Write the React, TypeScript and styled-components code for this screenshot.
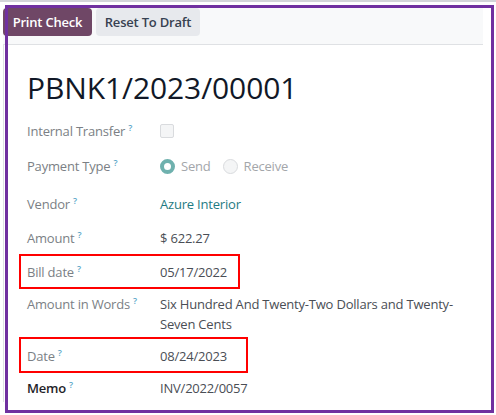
import React from "react";
import styled, { createGlobalStyle } from "styled-components";

const GlobalStyle = createGlobalStyle`
  html, body { margin: 0; padding: 0; background: #ffffff; }
  body { font-family: "Open Sans", "Noto Sans", sans-serif; }
  * { box-sizing: border-box; }
`;

const Page = styled.div`
  position: relative;
  width: 496px;
  height: 415px;
  overflow: hidden;
  background: #fff;
  display: flex;
  flex-direction: column;
`;

const TopRule = styled.div`
  height: 2px;
  background: #d3d5d9;
  margin-bottom: 6px;
`;

const Toolbar = styled.div`
  margin-left: 3px;
  width: 480px;
  height: 37px;
  background: #f8f9fa;
  border-bottom: 1px solid #dfe1e4;
  display: flex;
  align-items: flex-start;
  gap: 4px;
`;

const Button = styled.button<{ $primary?: boolean }>`
  height: 28px;
  padding: 0;
  border: none;
  border-radius: 4px;
  font-family: "Open Sans", sans-serif;
  font-size: 13px;
  line-height: 28px;
  font-weight: 600;
  letter-spacing: -0.2px;
  white-space: nowrap;
  text-align: center;
  cursor: pointer;
  background: ${(p) => (p.$primary ? "#6f4766" : "#e7e9ed")};
  color: ${(p) => (p.$primary ? "#ffffff" : "#374151")};
  width: ${(p) => (p.$primary ? "89px" : "104px")};
`;

const Sheet = styled.div`
  margin-left: 3px;
  width: 480px;
  height: 357px;
  border-left: 1px solid #dfe1e4;
  padding: 25px 0 0 23px;
  display: flex;
  flex-direction: column;
`;

const Title = styled.h1`
  margin: 0;
  font-size: 30px;
  line-height: 36px;
  font-weight: 400;
  color: #111827;
  letter-spacing: -0.1px;
`;

const FieldRow = styled.div<{ $gap: number }>`
  display: grid;
  grid-template-columns: 133px 1fr;
  margin-top: ${(p) => p.$gap}px;
  font-size: 13px;
  line-height: 20px;
  letter-spacing: -0.2px;
`;

const Label = styled.div<{ $strong?: boolean }>`
  color: ${(p) => (p.$strong ? "#1f2328" : "#7b7f85")};
  font-weight: ${(p) => (p.$strong ? 600 : 400)};
  white-space: nowrap;
`;

const Help = styled.sup`
  color: #5aa6c8;
  font-size: 9px;
  font-weight: 600;
  margin-left: 3px;
  vertical-align: 5px;
  line-height: 0;
`;

const Value = styled.div<{ $link?: boolean }>`
  color: ${(p) => (p.$link ? "#1f7b83" : "#4a4e55")};
  padding-right: 20px;
`;

const Checkbox = styled.span`
  display: inline-block;
  width: 14px;
  height: 14px;
  margin-top: 3px;
  border: 1px solid #d9dbde;
  border-radius: 2px;
  background: #f4f5f6;
`;

const RadioGroup = styled.div`
  display: flex;
  align-items: center;
  gap: 6px;
  color: #a3a6aa;
`;

const Radio = styled.span<{ $checked?: boolean }>`
  display: inline-block;
  width: 15px;
  height: 15px;
  border-radius: 50%;
  background: #fff;
  border: ${(p) => (p.$checked ? "4px solid #6fb1ae" : "1px solid #d9dbde")};
  ${(p) => (p.$checked ? "" : "background: #f4f5f6;")}
`;

const RadioText = styled.span`
  margin-right: 6px;
`;

const Frame = styled.div`
  position: absolute;
  left: 5px;
  top: 5px;
  width: 489px;
  height: 408px;
  border: 3px solid #7030a0;
  pointer-events: none;
`;

const Highlight = styled.div<{ $x: number; $y: number; $w: number; $h: number }>`
  position: absolute;
  left: ${(p) => p.$x}px;
  top: ${(p) => p.$y}px;
  width: ${(p) => p.$w}px;
  height: ${(p) => p.$h}px;
  border: 2px solid #ff0000;
  pointer-events: none;
`;

export default function App() {
  return (
    <>
      <GlobalStyle />
      <Page>
        <TopRule />
        <Toolbar>
          <Button $primary>Print Check</Button>
          <Button>Reset To Draft</Button>
        </Toolbar>
        <Sheet>
          <Title>PBNK1/2023/00001</Title>
          <FieldRow $gap={15}>
            <Label>
              Internal Transfer<Help>?</Help>
            </Label>
            <Value>
              <Checkbox />
            </Value>
          </FieldRow>
          <FieldRow $gap={13}>
            <Label>
              Payment Type<Help>?</Help>
            </Label>
            <RadioGroup>
              <Radio $checked />
              <RadioText>Send</RadioText>
              <Radio />
              <RadioText>Receive</RadioText>
            </RadioGroup>
          </FieldRow>
          <FieldRow $gap={18}>
            <Label>
              Vendor<Help>?</Help>
            </Label>
            <Value $link>Azure Interior</Value>
          </FieldRow>
          <FieldRow $gap={14}>
            <Label>
              Amount<Help>?</Help>
            </Label>
            <Value>$ 622.27</Value>
          </FieldRow>
          <FieldRow $gap={14}>
            <Label>
              Bill date<Help>?</Help>
            </Label>
            <Value>05/17/2022</Value>
          </FieldRow>
          <FieldRow $gap={12}>
            <Label>
              Amount in Words<Help>?</Help>
            </Label>
            <Value>Six Hundred And Twenty-Two Dollars and Twenty-Seven Cents</Value>
          </FieldRow>
          <FieldRow $gap={12}>
            <Label>
              Date<Help>?</Help>
            </Label>
            <Value>08/24/2023</Value>
          </FieldRow>
          <FieldRow $gap={12}>
            <Label $strong>
              Memo<Help>?</Help>
            </Label>
            <Value>INV/2022/0057</Value>
          </FieldRow>
        </Sheet>
        <Frame />
        <Highlight $x={19} $y={254} $w={221} $h={35} />
        <Highlight $x={19} $y={337} $w={229} $h={36} />
      </Page>
    </>
  );
}
